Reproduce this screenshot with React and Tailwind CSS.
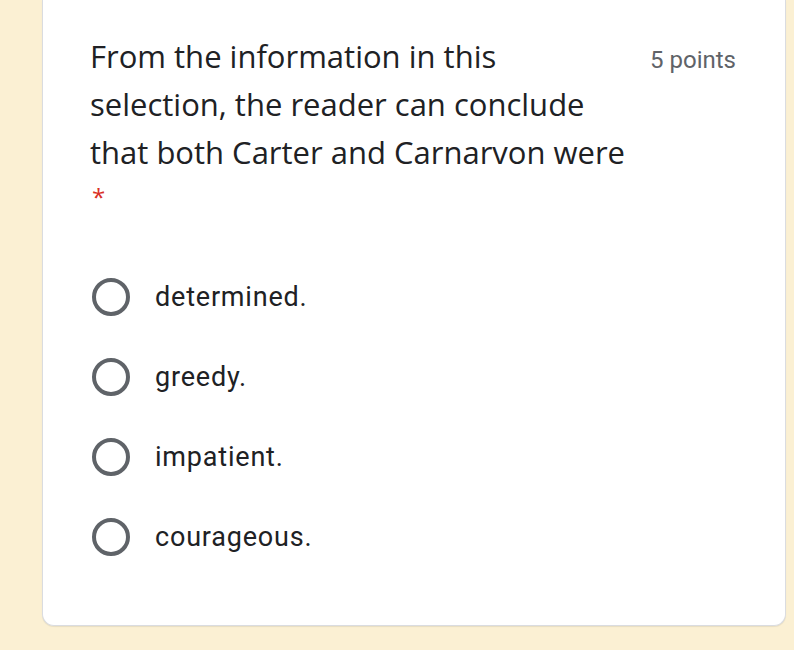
import { useState } from 'react'

const options = ['determined.', 'greedy.', 'impatient.', 'courageous.']

export default function App() {
  const [picked, setPicked] = useState(null)

  return (
    <div className="w-[794px] h-[650px] bg-[#fbf0d3] overflow-hidden">
      <div className="ml-[42px] w-[744px] h-[626px] bg-white border border-t-0 border-[#dadce0] rounded-b-[12px] shadow-[0_1px_1px_rgba(0,0,0,0.08)] pl-[49px] pr-[49px] pt-[32px]">
        <div className="flex justify-between items-start">
          <div className="-ml-[2px] w-[540px] text-[31px] leading-[48px] text-[#202124] font-['Open_Sans',sans-serif]">
            From the information in this selection, the reader can conclude that both Carter and Carnarvon were
            <div className="ml-[2px] text-[#d93025] text-[24px] leading-[40px] mt-[1px]">*</div>
          </div>
          <div className="pt-[10px] text-[24px] text-[#5f6368] font-['Roboto',sans-serif]">5 points</div>
        </div>

        <div className="mt-[61px] flex flex-col gap-[42px] font-['Roboto',sans-serif]">
          {options.map((o, i) => (
            <label key={o} className="flex items-center h-[38px] cursor-pointer" onClick={() => setPicked(i)}>
              <span className="w-[38px] h-[38px] rounded-full border-[4px] border-[#5f6368] flex items-center justify-center">
                {picked === i && <span className="w-[18px] h-[18px] rounded-full bg-[#5f6368]" />}
              </span>
              <span className="ml-[25px] text-[27px] tracking-[0.8px] text-[#202124]">{o}</span>
            </label>
          ))}
        </div>
      </div>
    </div>
  )
}
